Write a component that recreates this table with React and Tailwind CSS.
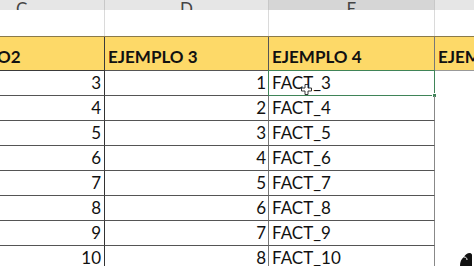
import React from 'react';

const rows = [
  [3, 1, 'FACT_3'],
  [4, 2, 'FACT_4'],
  [5, 3, 'FACT_5'],
  [6, 4, 'FACT_6'],
  [7, 5, 'FACT_7'],
  [8, 6, 'FACT_8'],
  [9, 7, 'FACT_9'],
  [10, 8, 'FACT_10'],
];

const font = { fontFamily: 'Lato, "Open Sans", sans-serif' };

const App = () => {
  return (
    <div className="relative w-[474px] h-[266px] overflow-hidden bg-white text-[#111]" style={font}>
      {/* column letters */}
      <div className="grid grid-cols-[105px_164px_166px_1fr] h-[10px] overflow-hidden text-[17px] leading-none text-[#444]">
        <div className="flex items-end pb-[1px] pl-[16px] bg-[#e6e6e6] border-r border-b border-[#c8c8c8]">C</div>
        <div className="flex items-end justify-center pb-[1px] bg-[#e6e6e6] border-r border-b border-[#c8c8c8]">D</div>
        <div className="flex items-end justify-center bg-[#d6d6d6] border-r border-[#c8c8c8] border-b-2 border-b-[#217346]">E</div>
        <div className="bg-[#e6e6e6] border-b border-[#c8c8c8]"></div>
      </div>

      {/* empty row */}
      <div className="grid grid-cols-[105px_164px_166px_1fr] h-[26px]">
        <div className="border-r border-[#dadada]"></div>
        <div className="border-r border-[#dadada]"></div>
        <div className="border-r border-[#dadada]"></div>
        <div></div>
      </div>

      {/* yellow headers */}
      <div className="grid grid-cols-[105px_164px_166px_1fr] h-[35px] bg-[#fdd968] border-t border-[#8a7a4a] font-bold text-[17px] leading-none">
        <div className="flex items-end pb-[5px] border-r border-b border-[#3a3a3a]">
          <span className="-ml-[3px]">O2</span>
        </div>
        <div className="flex items-end pb-[5px] pl-[3px] border-r border-b border-[#555]">EJEMPLO 3</div>
        <div className="flex items-end pb-[5px] pl-[3px] border-r border-b border-[#777]">EJEMPLO 4</div>
        <div className="flex items-end pb-[5px] pl-[3px] border-b border-[#999]">EJEMPLO</div>
      </div>

      {/* data rows */}
      {rows.map(([c, d, e], i) => (
        <div key={i} className="grid grid-cols-[105px_164px_166px_1fr] h-[25px] text-[17px] leading-none">
          <div className="flex items-end justify-end pb-[4px] pr-[3px] border-r border-b border-r-[#333] border-b-[#555]">{c}</div>
          <div className="flex items-end justify-end pb-[4px] pr-[2px] border-r border-b border-r-[#777] border-b-[#555]">{d}</div>
          <div className="relative flex items-end pb-[4px] pl-[3px] border-r border-b border-r-[#888] border-b-[#555]">
            {e}
            {i === 0 && (
              <>
                <div className="absolute -left-px -top-px -right-px -bottom-px border-[1.5px] border-[#3f8458]"></div>
                <div className="absolute -right-[3px] -bottom-[3px] w-[5px] h-[5px] bg-[#3f8458] border border-white"></div>
                <svg className="absolute left-[32px] top-[13px]" width="11" height="11" viewBox="0 0 11 11">
                  <path d="M4 0.5h3v3.5h3.5v3h-3.5v3.5h-3v-3.5h-3.5v-3h3.5z" fill="#fff" stroke="#222" strokeWidth="0.9" />
                </svg>
              </>
            )}
          </div>
          <div></div>
        </div>
      ))}

      {/* stray cursor at bottom right */}
      <svg className="absolute left-[457px] top-[250px]" width="17" height="16" viewBox="0 0 17 16">
        <path d="M3 16c0-4 1-7 4-9 1-2 3-4 6-4 1 0 2 1 2 2v11z" fill="#111" />
        <path d="M7 7c2 0 3 1 3 3" stroke="#fff" strokeWidth="1" fill="none" />
      </svg>
    </div>
  );
};

export default App;
